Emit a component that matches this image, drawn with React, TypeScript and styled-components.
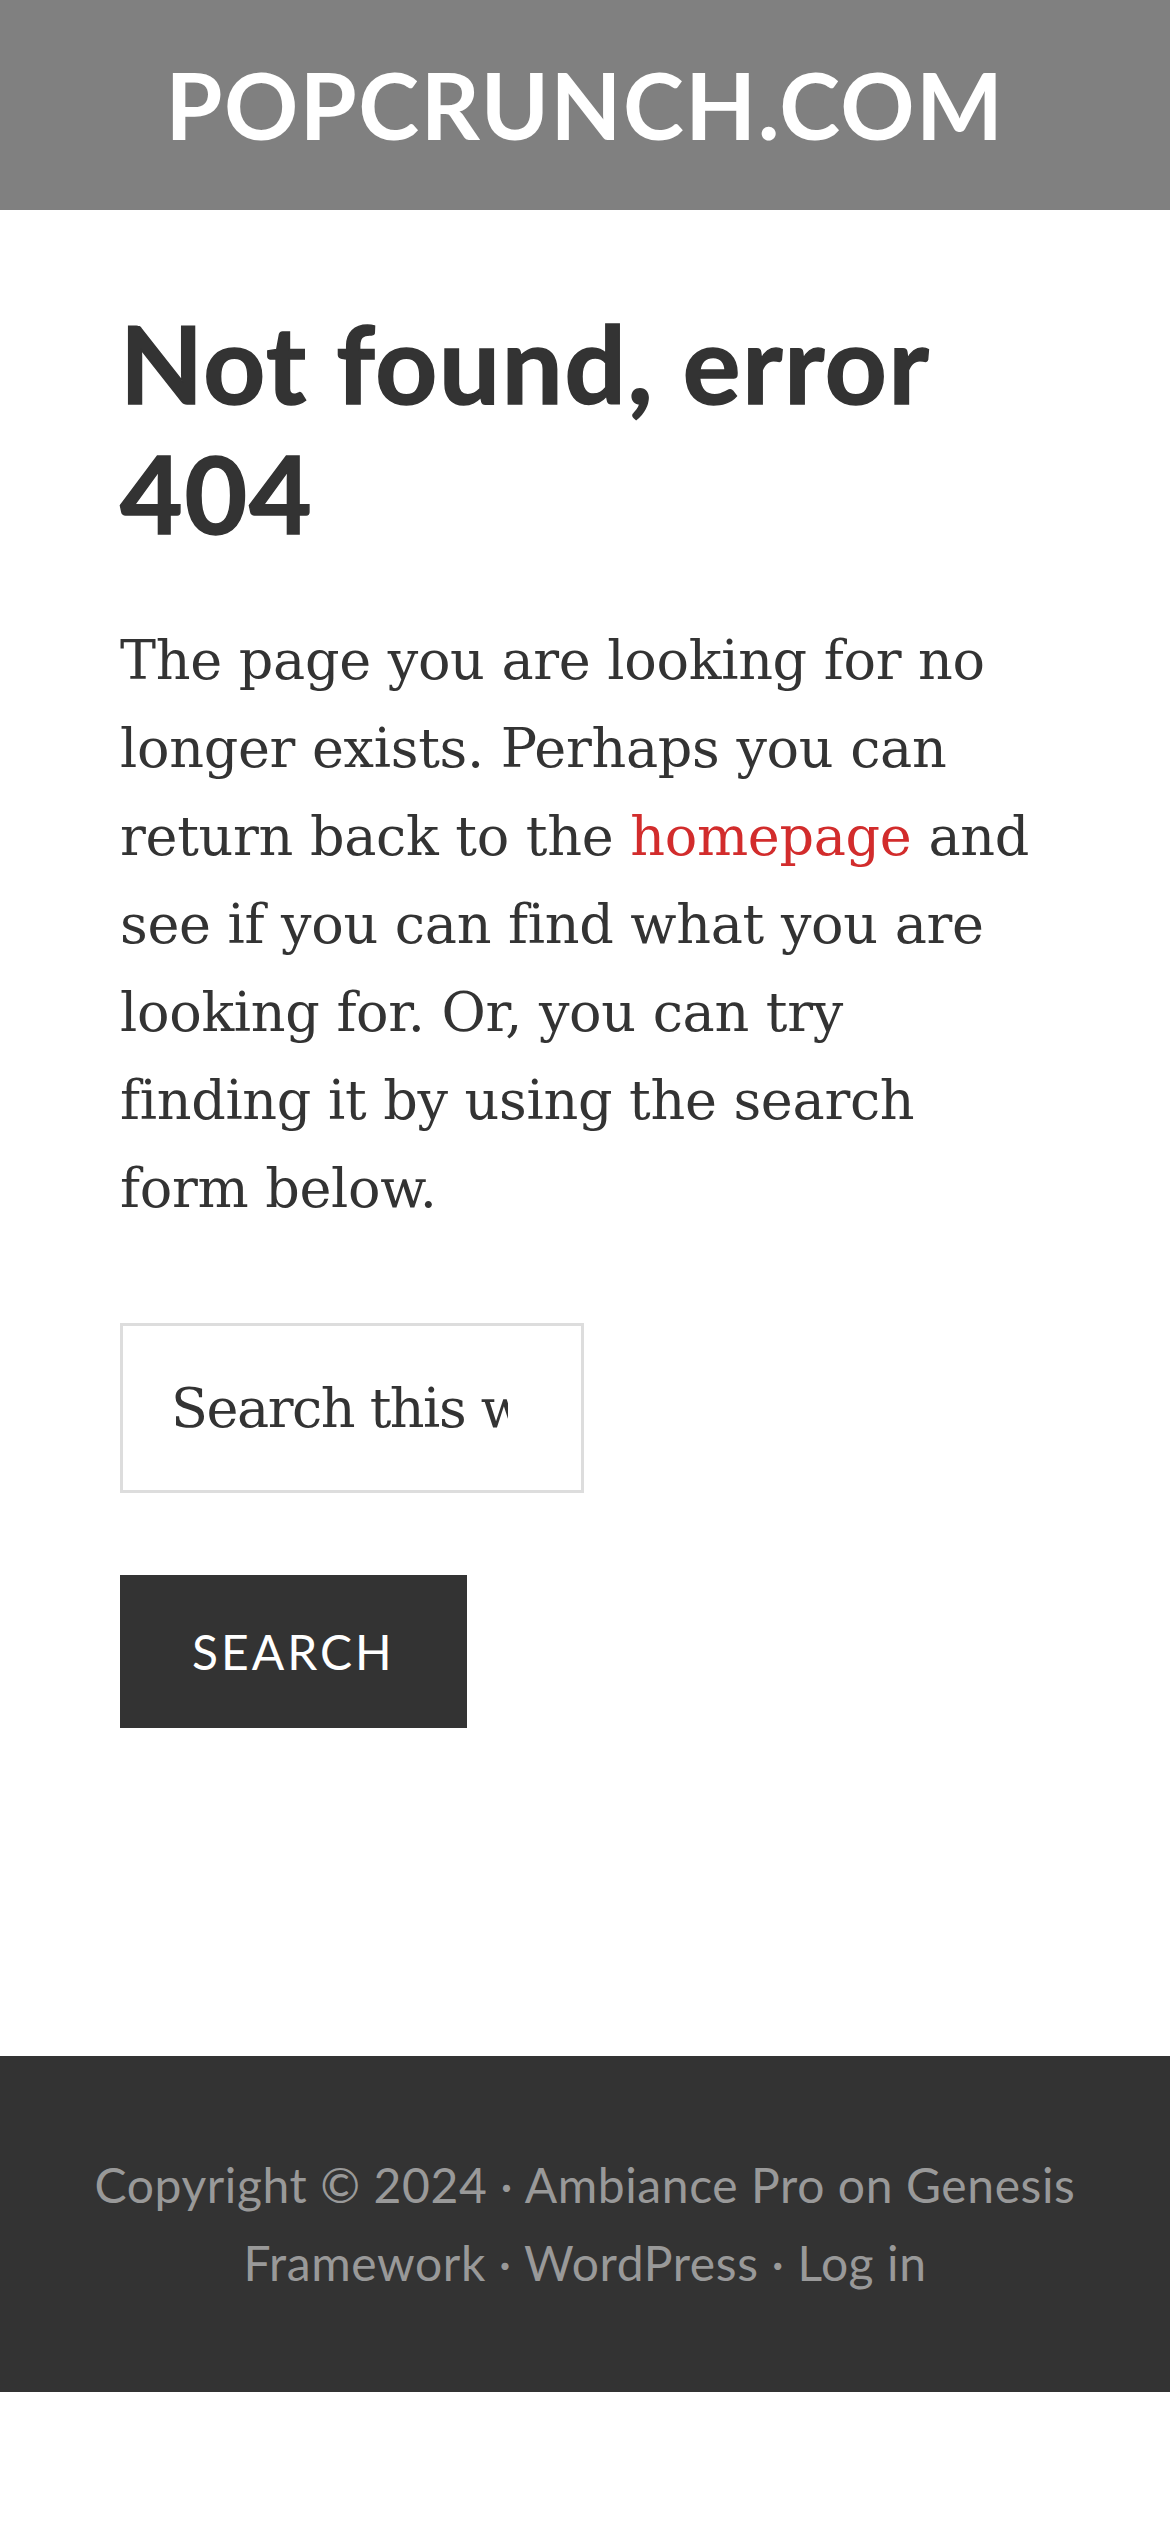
import React from "react";
import styled, { createGlobalStyle } from "styled-components";

const Global = createGlobalStyle`
  html, body { margin: 0; padding: 0; background: #fff; }
  body { font-family: "DejaVu Serif", serif; color: #333; }
  * { box-sizing: border-box; }
`;

const Header = styled.header`
  height: 210px;
  background: #808080;
  display: flex;
  align-items: center;
  justify-content: center;
`;

const SiteTitle = styled.a`
  font-family: Lato, "Liberation Sans", sans-serif;
  font-weight: 700;
  font-size: 92px;
  line-height: 1;
  color: #fff;
  text-decoration: none;
  text-transform: uppercase;
  letter-spacing: 1.5px;
`;

const Main = styled.main`
  padding: 88px 120px 328px;
`;

const Heading = styled.h1`
  font-family: Lato, "Liberation Sans", sans-serif;
  font-weight: 700;
  font-size: 108px;
  line-height: 1.2;
  letter-spacing: 1.8px;
  -webkit-text-stroke: 1.5px #333;
  color: #333;
  margin: 0 0 60px;
`;

const Text = styled.p`
  font-family: "DejaVu Serif", serif;
  font-weight: 400;
  font-size: 54px;
  line-height: 88px;
  letter-spacing: -0.3px;
  color: #333;
  margin: 0 0 90px;
`;

const Link = styled.a`
  color: #d22c2c;
  text-decoration: none;
`;

const SearchForm = styled.form`
  display: flex;
  flex-direction: column;
  align-items: flex-start;
  gap: 82px;
`;

const SearchInput = styled.input`
  width: 464px;
  height: 170px;
  border: 3px solid #ddd;
  padding: 0 48px;
  font-family: "DejaVu Serif", serif;
  font-size: 54px;
  letter-spacing: -1.5px;
  color: #333;
  background: #fff;
  outline: none;
  &::placeholder { color: #333; opacity: 1; }
`;

const SearchButton = styled.button`
  height: 153px;
  padding: 0 72px;
  border: none;
  background: #333;
  color: #fff;
  font-family: Lato, "Liberation Sans", sans-serif;
  font-weight: 400;
  font-size: 48px;
  letter-spacing: 3px;
  text-transform: uppercase;
  cursor: pointer;
`;

const Footer = styled.footer`
  background: #333;
  padding: 90px 60px;
  text-align: center;
  font-family: Lato, "Liberation Sans", sans-serif;
  font-size: 48px;
  line-height: 78px;
  letter-spacing: 0.6px;
  color: #999;
`;

const FooterLink = styled.a`
  color: #999;
  text-decoration: none;
`;

const Tail = styled.div`
  height: 139px;
  background: #fff;
`;

export default function App() {
  return (
    <>
      <Global />
      <Header>
        <SiteTitle href="#">Popcrunch.com</SiteTitle>
      </Header>
      <Main>
        <Heading>Not found, error 404</Heading>
        <Text>
          The page you are looking for no longer exists. Perhaps you can return back to the{" "}
          <Link href="#">homepage</Link> and see if you can find what you are looking for. Or, you
          can try finding it by using the search form below.
        </Text>
        <SearchForm onSubmit={(e) => e.preventDefault()}>
          <SearchInput type="search" placeholder="Search this website" />
          <SearchButton type="submit">Search</SearchButton>
        </SearchForm>
      </Main>
      <Footer>
        Copyright © 2024 · <FooterLink href="#">Ambiance Pro</FooterLink> on{" "}
        <FooterLink href="#">Genesis Framework</FooterLink> · <FooterLink href="#">WordPress</FooterLink> ·{" "}
        <FooterLink href="#">Log in</FooterLink>
      </Footer>
      <Tail />
    </>
  );
}
